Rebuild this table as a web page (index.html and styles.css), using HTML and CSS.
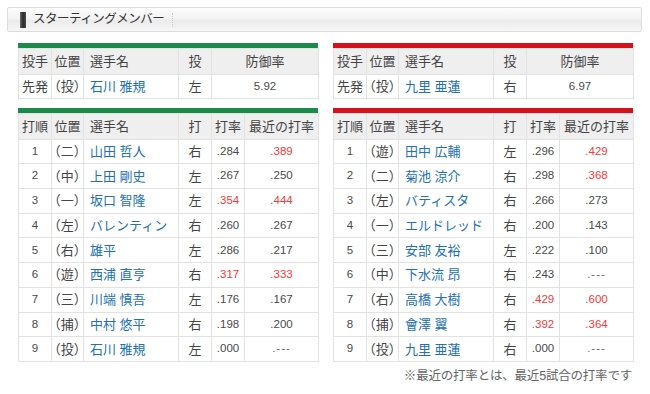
FILE: index.html
```html
<!DOCTYPE html>
<html lang="ja">
<head>
<meta charset="utf-8">
<title>スターティングメンバー</title>
<link rel="stylesheet" href="styles.css">
</head>
<body>
<div class="page">
  <div class="title-bar">
    <span class="marker"></span>
    <span class="title">スターティングメンバー</span>
    <span class="dots"></span>
  </div>

  <div class="teams">
    <div class="team">
      <div class="tbl green">
        <table>
          <colgroup><col class="c1"><col class="c2"><col class="c3"><col class="c4"><col class="c5p"></colgroup>
          <tr class="head"><th>投手</th><th>位置</th><th class="l">選手名</th><th>投</th><th>防御率</th></tr>
          <tr><td>先発</td><td class="pos">（投）</td><td class="name">石川 雅規</td><td>左</td><td class="num">5.92</td></tr>
        </table>
      </div>
      <div class="tbl green bat">
        <table>
          <colgroup><col class="c1"><col class="c2"><col class="c3"><col class="c4"><col class="c5"><col class="c6"></colgroup>
          <tr class="head"><th>打順</th><th>位置</th><th class="l">選手名</th><th>打</th><th>打率</th><th>最近の打率</th></tr>
          <tr><td class="num">1</td><td class="pos">（二）</td><td class="name">山田 哲人</td><td>右</td><td class="num">.284</td><td class="num red">.389</td></tr>
          <tr><td class="num">2</td><td class="pos">（中）</td><td class="name">上田 剛史</td><td>左</td><td class="num">.267</td><td class="num">.250</td></tr>
          <tr><td class="num">3</td><td class="pos">（一）</td><td class="name">坂口 智隆</td><td>左</td><td class="num red">.354</td><td class="num red">.444</td></tr>
          <tr><td class="num">4</td><td class="pos">（左）</td><td class="name">バレンティン</td><td>右</td><td class="num">.260</td><td class="num">.267</td></tr>
          <tr><td class="num">5</td><td class="pos">（右）</td><td class="name">雄平</td><td>左</td><td class="num">.286</td><td class="num">.217</td></tr>
          <tr><td class="num">6</td><td class="pos">（遊）</td><td class="name">西浦 直亨</td><td>右</td><td class="num red">.317</td><td class="num red">.333</td></tr>
          <tr><td class="num">7</td><td class="pos">（三）</td><td class="name">川端 慎吾</td><td>左</td><td class="num">.176</td><td class="num">.167</td></tr>
          <tr><td class="num">8</td><td class="pos">（捕）</td><td class="name">中村 悠平</td><td>右</td><td class="num">.198</td><td class="num">.200</td></tr>
          <tr><td class="num">9</td><td class="pos">（投）</td><td class="name">石川 雅規</td><td>左</td><td class="num">.000</td><td class="num dash">.---</td></tr>
        </table>
      </div>
    </div>

    <div class="team">
      <div class="tbl red-top">
        <table>
          <colgroup><col class="c1"><col class="c2"><col class="c3"><col class="c4"><col class="c5p"></colgroup>
          <tr class="head"><th>投手</th><th>位置</th><th class="l">選手名</th><th>投</th><th>防御率</th></tr>
          <tr><td>先発</td><td class="pos">（投）</td><td class="name">九里 亜蓮</td><td>右</td><td class="num">6.97</td></tr>
        </table>
      </div>
      <div class="tbl red-top bat">
        <table>
          <colgroup><col class="c1"><col class="c2"><col class="c3"><col class="c4"><col class="c5"><col class="c6"></colgroup>
          <tr class="head"><th>打順</th><th>位置</th><th class="l">選手名</th><th>打</th><th>打率</th><th>最近の打率</th></tr>
          <tr><td class="num">1</td><td class="pos">（遊）</td><td class="name">田中 広輔</td><td>左</td><td class="num">.296</td><td class="num red">.429</td></tr>
          <tr><td class="num">2</td><td class="pos">（二）</td><td class="name">菊池 涼介</td><td>右</td><td class="num">.298</td><td class="num red">.368</td></tr>
          <tr><td class="num">3</td><td class="pos">（左）</td><td class="name">バティスタ</td><td>右</td><td class="num">.266</td><td class="num">.273</td></tr>
          <tr><td class="num">4</td><td class="pos">（一）</td><td class="name">エルドレッド</td><td>右</td><td class="num">.200</td><td class="num">.143</td></tr>
          <tr><td class="num">5</td><td class="pos">（三）</td><td class="name">安部 友裕</td><td>左</td><td class="num">.222</td><td class="num">.100</td></tr>
          <tr><td class="num">6</td><td class="pos">（中）</td><td class="name">下水流 昂</td><td>右</td><td class="num">.243</td><td class="num dash">.---</td></tr>
          <tr><td class="num">7</td><td class="pos">（右）</td><td class="name">高橋 大樹</td><td>右</td><td class="num red">.429</td><td class="num red">.600</td></tr>
          <tr><td class="num">8</td><td class="pos">（捕）</td><td class="name">會澤 翼</td><td>右</td><td class="num red">.392</td><td class="num red">.364</td></tr>
          <tr><td class="num">9</td><td class="pos">（投）</td><td class="name">九里 亜蓮</td><td>右</td><td class="num">.000</td><td class="num dash">.---</td></tr>
        </table>
      </div>
      <p class="note">※最近の打率とは、最近5試合の打率です</p>
    </div>
  </div>
</div>
</body>
</html>
```

FILE: styles.css
```css
* { box-sizing: border-box; }
html, body { margin: 0; padding: 0; background: #fff; }
body {
  font-family: "Liberation Sans", "Noto Sans CJK JP", sans-serif;
  color: #333;
  width: 650px;
  height: 394px;
  overflow: hidden;
}
.page { padding: 7px 8px 0 7px; }

.title-bar {
  height: 25px;
  width: 635px;
  border: 1px solid #dcdcdc;
  border-radius: 2px;
  background: linear-gradient(to bottom, #fdfdfd 0%, #f3f3f3 45%, #ebebeb 55%, #f6f6f6 100%);
  display: flex;
  align-items: center;
  padding-left: 12px;
}
.marker {
  width: 6px;
  height: 16px;
  background: linear-gradient(to right, #6a6a6a, #2a2a2a 50%, #4a4a4a);
  margin-right: 7px;
}
.title {
  font-size: 12.5px;
  color: #333;
  letter-spacing: -0.5px;
  line-height: 1;
}
.dots {
  width: 0;
  height: 14px;
  border-left: 1px dotted #c8c8c8;
  margin-left: 8px;
}

.teams {
  display: flex;
  gap: 15px;
  padding-left: 11px;
  margin-top: 11px;
}
.team { width: 300px; }

.tbl { border-top: 5px solid #1b8a4b; }
.tbl.red-top { border-top-color: #d8101c; }
.tbl.bat { margin-top: 9px; }

table {
  width: 300px;
  border-collapse: collapse;
  table-layout: fixed;
  border: 1px solid #e2e2e2;
  border-top: 0;
}
.c1 { width: 33px; }
.c2 { width: 32px; }
.c3 { width: 95px; }
.c4 { width: 33px; }
.c5 { width: 33px; }
.c5p { width: 107px; }
.c6 { width: 74px; }

tr { height: 24.7px; }
tr.head { height: 25.5px; }
th, td {
  border: 1px solid #e2e2e2;
  padding: 0;
  text-align: center;
  font-size: 13px;
  font-weight: normal;
  color: #444;
  white-space: nowrap;
  line-height: 1;
}
th { background: #efefef; color: #444; }
th.l { text-align: left; padding-left: 6px; }
td.name { text-align: left; padding-left: 6px; color: #2271b3; }
td.pos { font-feature-settings: "palt"; letter-spacing: 0.5px; }
td.num { font-size: 11.5px; color: #4a4a4a; }
td.dash { letter-spacing: 1px; color: #666; }
td.red { color: #f43a3a; }

.note {
  margin: 3px 0 0;
  text-align: right;
  font-size: 12.5px;
  color: #666;
  padding-right: 1px;
  letter-spacing: -0.2px;
}
```
